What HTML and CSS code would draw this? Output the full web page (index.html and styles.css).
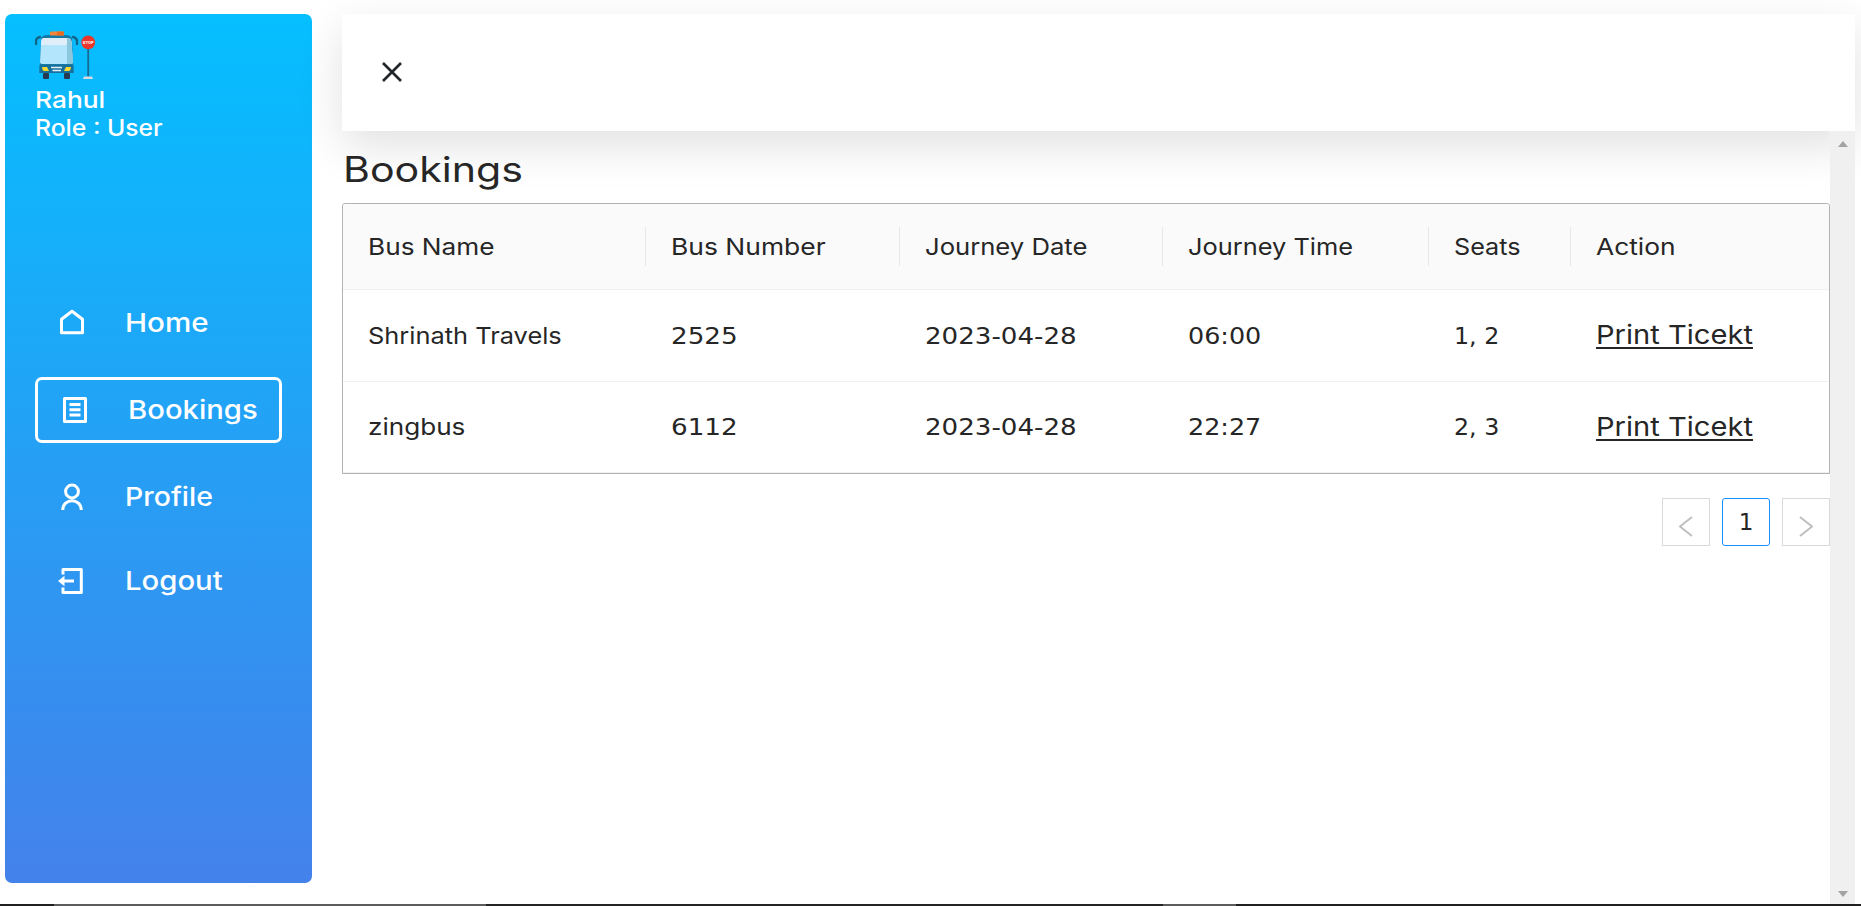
FILE: index.html
```
<!DOCTYPE html>
<html lang="en">
<head>
<meta charset="utf-8">
<title>Bookings</title>
<link rel="stylesheet" href="styles.css">
</head>
<body>
<div class="layout">
  <aside class="sidebar">
    <div class="sidebar-header">
      <svg class="logo" width="64" height="50" viewBox="0 0 64 50">
        <path d="M5 6Q1 7 1 10V13M38 6Q42 7 42 10V13" fill="none" stroke="#13648a" stroke-width="2.4" stroke-linecap="round"/>
        <path d="M6 8Q7 4 12 4H31Q36 4 37 8L38.500 42H4.500Z" fill="#1479a5"/>
        <rect x="15" y=".5" width="14" height="4" rx=".8" fill="#f6853b"/><path d="M22 .5H28Q29 .5 29 1.500V4.500H22Z" fill="#e86a22"/>
        <path d="M9 7H32Q36 7 36.500 11L38 31Q38 33 36 33H7Q5 33 5 31L6 11Q6 7 9 7Z" fill="#b3e5fc"/>
        <path d="M9 7H32Q36 7 36.500 11V14H6Q6 7 9 7Z" fill="#e1edf8"/>
        <path d="M32 7Q36 7 36.500 11L38 31Q38 33 36 33H32Z" fill="#8cc8dd"/>
        <path d="M4.500 34H38.500V42H4.500Z" fill="#176f9c"/>
        <path d="M7 36H12L14 40H9Q7 39 7 36ZM36 36H31L29 40H34Q36 39 36 36Z" fill="#ffda2d"/>
        <path d="M16 36.500H27M17.500 39.500H26" stroke="#e4f1f9" stroke-width="1.500"/>
        <rect x="8" y="42" width="6" height="6" rx="1" fill="#263b52"/><rect x="29" y="42" width="6" height="6" rx="1" fill="#263b52"/>
        <path d="M53.200 17V46" stroke="#176a91" stroke-width="1.800"/>
        <path d="M48 48L49 45.500H57L58 48Z" fill="#d5dce0"/>
        <circle cx="53.200" cy="11.300" r="6.900" fill="#ed352b"/>
        <text class="sign" x="53.200" y="12.900" text-anchor="middle">STOP</text>
      </svg>
      <p class="user-line"><span class="wide w-rahul">Rahul</span></p>
      <p class="user-line"><span class="wide w-role">Role : User</span></p>
    </div>
    <nav class="menu">
      <a class="menu-item">
        <svg class="icon" width="30" height="30" viewBox="0 0 30 30"><path d="M4.500 11.200L15 3.200L25.500 11.200V24.700H4.500Z"/></svg>
        <span class="wide w-home">Home</span>
      </a>
      <a class="menu-item active">
        <svg class="icon" width="30" height="30" viewBox="0 0 30 30"><path d="M4.500 3.500H25.500V26.500H4.500ZM9.500 9.600H20.500M9.500 14.700H20.500M9.500 20H20.500"/></svg>
        <span class="wide w-book">Bookings</span>
      </a>
      <a class="menu-item">
        <svg class="icon" width="30" height="30" viewBox="0 0 30 30"><circle cx="15" cy="9.500" r="6.400"/><path d="M5.800 28C5.800 15.800 24.200 15.800 24.200 28"/></svg>
        <span class="wide w-profile">Profile</span>
      </a>
      <a class="menu-item">
        <svg class="icon" width="30" height="30" viewBox="0 0 30 30"><path d="M6 8.500V3.500H24.300V26.500H6V21.500M7 15H17"/><path class="solid" d="M1 15L7.500 9.800V20.200Z"/></svg>
        <span class="wide w-logout">Logout</span>
      </a>
    </nav>
  </aside>
  <main class="body">
    <header class="header">
      <svg class="close" width="20" height="20" viewBox="0 0 20 20"><path d="M1 1L19 19M19 1L1 19"/></svg>
    </header>
    <div class="scroll">
      <section class="content">
        <h1 class="title"><span class="wide w-title">Bookings</span></h1>
        <div class="table">
          <div class="row head">
            <div class="cell"><span class="wide w-name">Bus Name</span></div>
            <div class="cell"><span class="wide w-number">Bus Number</span></div>
            <div class="cell"><span class="wide w-date">Journey Date</span></div>
            <div class="cell"><span class="wide w-time">Journey Time</span></div>
            <div class="cell"><span class="wide w-seats">Seats</span></div>
            <div class="cell"><span class="wide w-action">Action</span></div>
          </div>
          <div class="row">
            <div class="cell"><span class="wide w-shrinath">Shrinath Travels</span></div>
            <div class="cell"><span class="wide num">2525</span></div>
            <div class="cell"><span class="wide num date">2023-04-28</span></div>
            <div class="cell"><span class="wide num time">06:00</span></div>
            <div class="cell"><span class="wide num seats">1, 2</span></div>
            <div class="cell"><span class="wide print">Print Ticekt</span></div>
          </div>
          <div class="row">
            <div class="cell"><span class="wide w-zing">zingbus</span></div>
            <div class="cell"><span class="wide num">6112</span></div>
            <div class="cell"><span class="wide num date">2023-04-28</span></div>
            <div class="cell"><span class="wide num time">22:27</span></div>
            <div class="cell"><span class="wide num seats">2, 3</span></div>
            <div class="cell"><span class="wide print">Print Ticekt</span></div>
          </div>
        </div>
        <div class="pagination">
          <div class="page"><svg class="arrow" width="14" height="21" viewBox="0 0 14 21"><path d="M13 1L1 10.500L13 20"/></svg></div>
          <div class="page current">1</div>
          <div class="page"><svg class="arrow" width="14" height="21" viewBox="0 0 14 21"><path d="M1 1L13 10.500L1 20"/></svg></div>
        </div>
      </section>
      <div class="scrollbar"><i class="up"></i><i class="down"></i></div>
    </div>
  </main>
</div>
<footer class="edge"></footer>
</body>
</html>
```
FILE: styles.css
```
*{box-sizing:border-box}
body{margin:0;height:906px;overflow:hidden;background:#fff;color:#262626;font-family:Inter,"Open Sans",sans-serif;display:flex;flex-direction:column}
.layout{flex:1;display:flex;gap:30px;padding:14px 6px 0 5px;min-height:0}

/* Montserrat-like wide proportions */
.wide{display:inline-block;transform-origin:0 50%;transform:scaleX(var(--w));white-space:nowrap}
.w-rahul{--w:1.14}
.w-role{--w:1.07}
.w-home{--w:1.14}
.w-book{--w:1.125}
.w-profile{--w:1.095}
.w-logout{--w:1.127}
.w-title{--w:1.185}
.w-name{--w:1.135}
.w-number{--w:1.145}
.w-date{--w:1.11}
.w-time{--w:1.1}
.w-seats{--w:1.09}
.w-action{--w:1.14}
.w-shrinath{--w:1.1}
.w-zing{--w:1.13}

.sidebar{width:307px;height:869px;border-radius:7px;padding:17px 30px 16px;background:linear-gradient(180deg,#05bfff,#4481eb);color:#fff;font-weight:500;display:flex;flex-direction:column}
.sidebar-header{height:262px}
.logo{display:block;margin-bottom:5px}
.sign{font:700 4px Inter,sans-serif;fill:#fff}
.user-line{margin:0;font-size:23.1px;line-height:28px}
.menu{display:flex;flex-direction:column;gap:24px}
.menu-item{height:60px;padding-left:22px;display:flex;align-items:center;gap:38px;font-size:26px;line-height:32px}
.menu-item.active{height:66px;border:3px solid #fff;border-radius:7px}
.icon{flex:none;fill:none;stroke:#fff;stroke-width:3;stroke-linejoin:round}
.icon .solid{fill:#fff;stroke:none}

.body{flex:1;display:flex;flex-direction:column;min-width:0}
.header{position:relative;height:117px;padding:0 0 2px 39.5px;display:flex;align-items:center;background:#fff;box-shadow:0 15px 45px rgba(0,0,0,.12)}
.close{fill:none;stroke:#22272b;stroke-width:2.7}
.scroll{flex:1;display:flex;position:relative}
.content{flex:1;min-width:0}
.title{margin:0;height:72px;padding:17px 0 0 1px;font-size:34.7px;line-height:42px;font-weight:400}
.table{height:271px;border:1px solid #b3b3b3;border-radius:3px 3px 0 0;display:grid;grid-template-rows:86px 92px 91px;font-size:23.1px}
.row{display:grid;grid-template-columns:303px 254px 263px 266px 142px 1fr;border-bottom:1px solid #f0f0f0}
.cell{position:relative;display:flex;align-items:center;padding-left:24.5px}
.head{background:#fafafa;border-radius:3px 3px 0 0}
.head .cell:not(:last-child)::after{content:"";position:absolute;right:0;top:23px;width:1px;height:39px;background:#e8e8e8}
.num{--w:1.14;font-family:"DejaVu Sans",sans-serif;font-size:23px}
.date{--w:1.135}
.time{--w:1.105}
.seats{--w:1.03}
.print{--w:1.12;margin-top:-2px;font-size:26px;text-decoration:underline;text-decoration-thickness:2px;text-underline-offset:3px;text-decoration-skip-ink:none}
.pagination{display:flex;justify-content:flex-end;gap:12px;margin-top:24px}
.page{width:48px;height:48px;border:1px solid #d9d9d9;display:flex;align-items:center;justify-content:center;font:23px "DejaVu Sans",sans-serif}
.page.current{border-color:#1890ff;border-radius:3px}
.arrow{margin-top:8px;fill:none;stroke:#bfbfbf;stroke-width:2}
.scrollbar{position:relative;width:25px;background:#f0f0f0;display:flex;flex-direction:column;justify-content:space-between;align-items:center;padding:10px 0 7px}
.up,.down{border:5.5px solid transparent}
.up{border-top:0;border-bottom:6px solid #a3a3a3}
.down{border-bottom:0;border-top:6px solid #a3a3a3}
.edge{height:2px;background:linear-gradient(90deg,#202020 54px,#5c5c5c 54px 486px,#242424 486px 1163px,#5c5c5c 1163px 1236px,#202020 1236px)}
```
